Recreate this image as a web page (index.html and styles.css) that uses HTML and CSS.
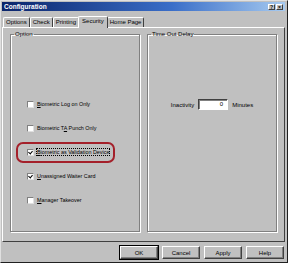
FILE: index.html
```html
<!DOCTYPE html>
<html>
<head>
    <link rel="stylesheet" href="styles.css">
</head>
<body>
    <div class="window">
        <div class="titlebar">
            <span class="title">Configuration</span>
            <div class="ctrls">
                <span class="cbtn">?</span>
                <span class="cbtn">×</span>
            </div>
        </div>

        <div class="tabs">
            <span class="tab">Options</span>
            <span class="tab">Check</span>
            <span class="tab">Printing</span>
            <span class="tab active">Security</span>
            <span class="tab">Home Page</span>
        </div>

        <div class="panel">
            <fieldset class="group">
                <legend>Option</legend>
                <div class="opts">
                    <label class="opt"><span class="box"></span><span><u>B</u>iometric Log on Only</span></label>
                    <label class="opt"><span class="box"></span><span>Biometric T<u>A</u> Punch Only</span></label>
                    <label class="opt marked"><span class="box on"></span><span class="focus"><u>B</u>iometric as Validation Device</span></label>
                    <label class="opt"><span class="box on"></span><span><u>U</u>nassigned Waiter Card</span></label>
                    <label class="opt"><span class="box"></span><span><u>M</u>anager Takeover</span></label>
                </div>
            </fieldset>

            <fieldset class="group">
                <legend>Time Out Delay</legend>
                <div class="delay">
                    <span>Inactivity</span>
                    <span class="field">0</span>
                    <span>Minutes</span>
                </div>
            </fieldset>
        </div>

        <div class="actions">
            <button class="btn default">OK</button>
            <button class="btn">Cancel</button>
            <button class="btn">Apply</button>
            <button class="btn">Help</button>
        </div>
    </div>
</body>
</html>
```

FILE: styles.css
```css
body {
    margin: 0;
    background: #c0c0c0;
    font-family: "Liberation Sans", Arial, sans-serif;
    font-size: 6px;
    color: #000;
}
.window {
    width: 288px;
    height: 263px;
    box-sizing: border-box;
    border: 1px solid;
    border-color: #e0e0e0 #202020 #202020 #e0e0e0;
    padding: 1px 2px 0 1px;
    background: #c0c0c0;
}
.titlebar {
    height: 9px;
    display: flex;
    align-items: center;
    justify-content: space-between;
    background: linear-gradient(90deg, #0a246a, #3a6ec8 60%, #a6caf0);
    padding: 0 2px;
}
.title {
    color: #fff;
    font-weight: bold;
    font-size: 6.5px;
}
.ctrls {
    display: flex;
    gap: 1px;
}
.cbtn {
    width: 7px;
    height: 6px;
    box-sizing: border-box;
    background: #c0c0c0;
    border: 1px solid;
    border-color: #fff #404040 #404040 #fff;
    font-size: 5px;
    font-weight: bold;
    line-height: 4px;
    text-align: center;
}
.tabs {
    display: flex;
    align-items: flex-end;
    height: 12px;
    margin-top: 4px;
    padding-left: 1px;
}
.tab {
    height: 9px;
    padding: 0 2px;
    border: 1px solid;
    border-bottom: none;
    border-color: #fff #404040 #404040 #fff;
    border-radius: 2px 2px 0 0;
    line-height: 9px;
    white-space: nowrap;
}
.tab.active {
    height: 11px;
    margin: 0 -1px -1px;
    padding: 0 3px;
    background: #c0c0c0;
    position: relative;
    z-index: 1;
}
.panel {
    height: 215px;
    box-sizing: border-box;
    display: flex;
    gap: 7px;
    padding: 3px 7px 9px;
    border: 1px solid;
    border-color: #fff #404040 #404040 #fff;
}
.group {
    flex: 1;
    margin: 0;
    padding: 0;
    min-width: 0;
    border: 1px solid #808080;
    box-shadow: inset 1px 1px 0 #fff, 1px 1px 0 #fff;
}
.group legend {
    margin-left: 3px;
    padding: 0 1px;
    line-height: 7px;
}
.opts {
    display: flex;
    flex-direction: column;
    gap: 16px;
    padding: 62px 0 0 16px;
    font-size: 5.4px;
}
.opt {
    display: flex;
    align-items: center;
    gap: 3px;
    height: 8px;
}
.marked {
    position: relative;
}
.marked::after {
    content: "";
    position: absolute;
    left: -11px;
    top: -6px;
    width: 95px;
    height: 17px;
    border: 2px solid #a4202a;
    border-radius: 7px;
}
.box {
    width: 7px;
    height: 7px;
    box-sizing: border-box;
    background: #fff;
    border: 1px solid;
    border-color: #808080 #e0e0e0 #e0e0e0 #808080;
    position: relative;
}
.box.on::before {
    content: "";
    position: absolute;
    left: 1px;
    top: 0;
    width: 2px;
    height: 3px;
    border: solid #000;
    border-width: 0 1px 1px 0;
    transform: rotate(40deg);
}
.focus {
    outline: 1px dotted #000;
}
.delay {
    display: flex;
    align-items: center;
    justify-content: center;
    gap: 4px;
    padding-top: 61px;
}
.field {
    width: 30px;
    height: 11px;
    box-sizing: border-box;
    background: #fff;
    border: 1px solid;
    border-color: #404040 #fff #fff #404040;
    box-shadow: inset 1px 1px 0 #808080;
    text-align: right;
    padding-right: 4px;
    line-height: 9px;
}
.actions {
    display: flex;
    justify-content: flex-end;
    gap: 4px;
    margin-top: 4px;
    padding-right: 1px;
}
.btn {
    width: 38px;
    height: 13px;
    margin: 0;
    padding: 0;
    background: #c0c0c0;
    border: 1px solid;
    border-color: #fff #404040 #404040 #fff;
    box-shadow: inset -1px -1px 0 #808080;
    font-family: inherit;
    font-size: 6px;
}
.btn.default {
    outline: 1px solid #000;
}
```
